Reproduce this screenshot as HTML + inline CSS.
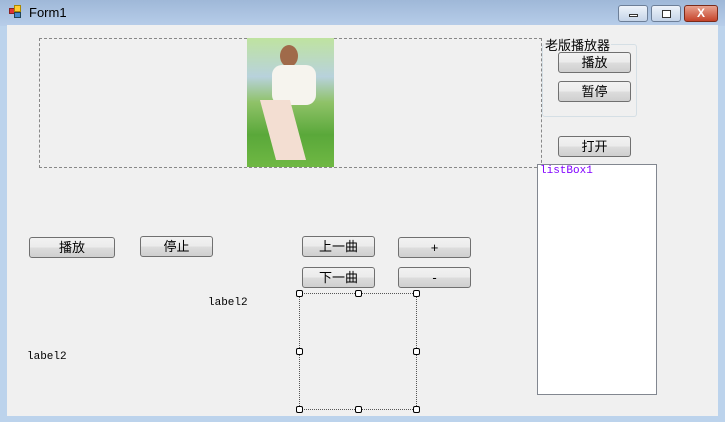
<!DOCTYPE html>
<html><head><meta charset="utf-8"><style>
*{margin:0;padding:0;box-sizing:border-box}
body{width:725px;height:422px;overflow:hidden;background:#bcd3ec;font-family:"Liberation Sans","Noto Sans CJK SC",sans-serif;position:relative}
.tb{position:absolute;left:0;top:0;width:725px;height:26px;background:linear-gradient(#9fb8d8,#b7cde9)}
.client{position:absolute;left:7px;top:25px;width:711px;height:391px;background:#f0f0f0}
.a{position:absolute}
.btn{position:absolute;border:1px solid #707070;border-radius:3px;background:linear-gradient(#f2f2f2 0,#ebebeb 50%,#dddddd 50%,#cfcfcf 100%);font-size:13px;text-align:center;line-height:19px;color:#000}
.lbl{position:absolute;font-family:"Liberation Mono",monospace;font-size:11px}
.h{position:absolute;width:7px;height:7px;border:1px solid #000;background:#fff;border-radius:2px}
.wb{position:absolute;top:5px;height:17px;border:1px solid #6d7f98;border-radius:3px;background:linear-gradient(#eef3fa,#c5d4e8)}
</style></head><body>
<div class="tb"></div>
<div class="a" style="left:9px;top:8px;width:6px;height:6px;background:#d33;border:1px solid #822"></div>
<div class="a" style="left:14px;top:5px;width:7px;height:7px;background:#fc3;border:1px solid #a80"></div>
<div class="a" style="left:14px;top:12px;width:7px;height:6px;background:#48c;border:1px solid #245"></div>
<div class="a" style="left:29px;top:5px;font-size:13px;color:#000">Form1</div>
<div class="wb" style="left:618px;width:30px"><div class="a" style="left:10px;top:8px;width:9px;height:3px;border:1px solid #333;background:#fff"></div></div>
<div class="wb" style="left:651px;width:30px"><div class="a" style="left:10px;top:4px;width:9px;height:8px;border:1px solid #333;background:#fff"></div></div>
<div class="wb" style="left:684px;width:34px;background:linear-gradient(#e8a28f,#c5432a);border-color:#7a2a1a;color:#fff;font-weight:bold;font-size:12px;text-align:center;line-height:15px">X</div>
<div class="client"></div>
<div class="a" style="left:39px;top:38px;width:503px;height:130px;border:1px dashed #888"></div>
<div class="a" style="left:247px;top:38px;width:87px;height:129px;background:linear-gradient(#bfe3a0 0,#b8d2dc 30%,#8fc268 50%,#5aa83a 75%,#6fb843 100%)"></div>
<div class="a" style="left:280px;top:45px;width:18px;height:22px;border-radius:50%;background:#a06a4a"></div>
<div class="a" style="left:272px;top:65px;width:44px;height:40px;border-radius:10px;background:#f6f4ee"></div>
<div class="a" style="left:268px;top:100px;width:30px;height:60px;background:#f3ded2;transform:skewX(15deg)"></div>
<div class="a" style="left:542px;top:44px;width:95px;height:73px;border:1px solid #d5dfe5;border-radius:3px"></div>
<div class="a" style="left:544px;top:35px;font-size:13px;background:#f0f0f0;padding:0 1px">老版播放器</div>
<div class="btn" style="left:558px;top:52px;width:73px;height:21px">播放</div>
<div class="btn" style="left:558px;top:81px;width:73px;height:21px">暂停</div>
<div class="btn" style="left:558px;top:136px;width:73px;height:21px">打开</div>
<div class="a" style="left:537px;top:164px;width:120px;height:231px;background:#fff;border:1px solid #828790"></div>
<div class="lbl" style="left:540px;top:165px;color:#8000ff">listBox1</div>
<div class="btn" style="left:29px;top:237px;width:86px;height:21px">播放</div>
<div class="btn" style="left:140px;top:236px;width:73px;height:21px">停止</div>
<div class="btn" style="left:302px;top:236px;width:73px;height:21px">上一曲</div>
<div class="btn" style="left:398px;top:237px;width:73px;height:21px">+</div>
<div class="btn" style="left:302px;top:267px;width:73px;height:21px">下一曲</div>
<div class="btn" style="left:398px;top:267px;width:73px;height:21px">-</div>
<div class="lbl" style="left:208px;top:297px">label2</div>
<div class="lbl" style="left:27px;top:351px">label2</div>
<div class="a" style="left:299px;top:293px;width:118px;height:117px;border:1px dotted #555"></div>
<div class="h" style="left:296px;top:290px"></div><div class="h" style="left:355px;top:290px"></div><div class="h" style="left:413px;top:290px"></div>
<div class="h" style="left:296px;top:348px"></div><div class="h" style="left:413px;top:348px"></div>
<div class="h" style="left:296px;top:406px"></div><div class="h" style="left:355px;top:406px"></div><div class="h" style="left:413px;top:406px"></div>
</body></html>
